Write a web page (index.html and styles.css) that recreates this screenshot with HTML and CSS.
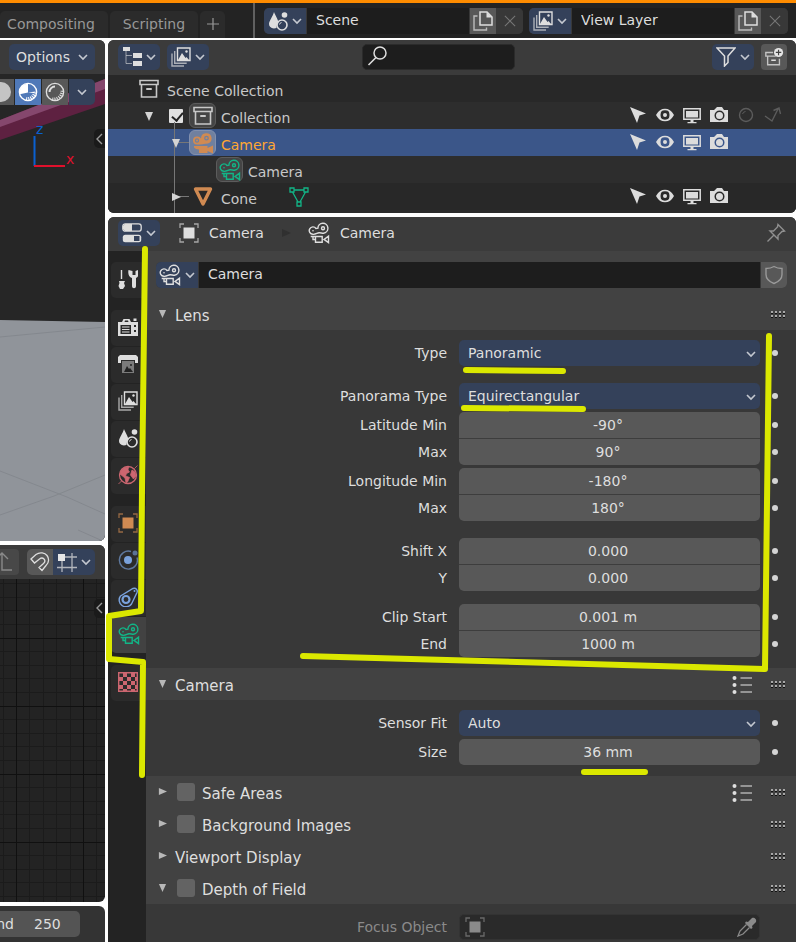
FILE: index.html
```html
<!DOCTYPE html>
<html lang="en">
<head>
  <meta charset="UTF-8" />
  <meta name="viewport" content="width=device-width, initial-scale=1.0"/>
  <title>Camera properties</title>
  <link rel="stylesheet" href="styles.css">
</head>
<body>
  <!-- Icon sprite -->
  <svg class="sprite" aria-hidden="true">
    <symbol id="chevron" viewBox="0 0 10 10"><path d="M1 3l4 4 4-4" fill="none" stroke="currentColor" stroke-width="1.6"/></symbol>
    <symbol id="chevron-left" viewBox="0 0 10 14"><path d="M8 2L3 7l5 5" fill="none" stroke="currentColor" stroke-width="1.4"/></symbol>
    <symbol id="down" viewBox="0 0 10 10"><path d="M1 1h8L5 10z" fill="currentColor"/></symbol>
    <symbol id="right" viewBox="0 0 10 10"><path d="M1 1l9 4-9 4z" fill="currentColor"/></symbol>
    <symbol id="plus" viewBox="0 0 14 14"><path d="M7 1v12M1 7h12" stroke="currentColor" stroke-width="1.2"/></symbol>
    <symbol id="close" viewBox="0 0 14 14"><path d="M1 1l12 12M13 1L1 13" stroke="currentColor" stroke-width="1.2"/></symbol>
    <symbol id="camera-data" viewBox="0 0 22 22">
      <g fill="none" stroke="currentColor" stroke-width="1.4">
        <path d="M4.8 12.3A3.700 3.700 0 1 1 8 6.500L9.900 6.200A5 5 0 1 1 15.500 11.200C14 11.500 13 10.700 11 10.800S8 12.600 4.800 12.300z"/>
        <circle cx="15" cy="6.200" r="1.500"/>
        <path d="M7.500 14.500h6.700v5.800H7.500zM2.700 14.500h4.800M5 14.500v3h2.500M20.500 14.200v6.400l-4.500-3.200z"/>
      </g>
      <circle cx="5" cy="8.800" r=".8" fill="currentColor"/>
    </symbol>
    <symbol id="camera-solid" viewBox="0 0 22 22">
      <path fill="currentColor" fill-rule="evenodd" d="M5 4.500a4 4 0 0 1 4 2A5.300 5.300 0 1 1 16 11.500C12 12 9 12.500 5 12.500a4 4 0 0 1 0-8zM5 6.300a2.200 2.200 0 1 0 0 4.400 2.200 2.200 0 0 0 0-4.400zM14.500 3.800a2.400 2.400 0 1 0 0 4.800 2.400 2.400 0 0 0 0-4.800z"/>
      <path d="M2 14h13.500v2l5.500-2.500v8L15.500 19v2H7v-3.500l-3-.5-2-1.500z" fill="currentColor"/>
      <circle cx="5" cy="8.500" r="1" fill="currentColor"/><circle cx="14.500" cy="6.200" r="1.100" fill="currentColor"/>
    </symbol>
    <symbol id="archive" viewBox="0 0 20 20"><path d="M1 1.500h18v4H1zM2.500 5.500v12.500h15V5.500" fill="none" stroke="currentColor" stroke-width="1.600"/><rect x="7" y="9" width="6" height="2" rx="1" fill="currentColor"/></symbol>
    <symbol id="archive-new" viewBox="0 0 22 22"><path d="M10 6H2v4h11M4 10v9.500h13V13" fill="none" stroke="currentColor" stroke-opacity=".8" stroke-width="1.500"/><path d="M8 14.500h5" stroke="currentColor" stroke-width="1.600"/><circle cx="16" cy="6" r="5" fill="#e6e6e6"/><path d="M16 3v6M13 6h6" stroke="#444" stroke-width="1.300"/></symbol>
    <symbol id="layers" viewBox="0 0 20 20">
      <path d="M6.500 1h12.500v12.500H6.500z" fill="none" stroke="currentColor" stroke-width="1.400"/>
      <path d="M7 13l4-7 3.500 5 1-1L18 13z" fill="currentColor"/><circle cx="15.500" cy="4.500" r="1.200" fill="currentColor"/>
      <path d="M3.700 4v12.300h12M1 6.500V19h12" fill="none" stroke="currentColor" stroke-opacity=".7" stroke-width="1.400"/>
    </symbol>
    <symbol id="scene" viewBox="0 0 20 20">
      <path d="M6 1c1 3 4.500 8 4.500 11-1.500 1-2 3-2 5C4 18.500 1 16 1 13c0-3 4-8 5-12z" fill="currentColor"/>
      <circle cx="16.500" cy="4" r="2.800" fill="currentColor"/>
      <circle cx="14" cy="14" r="5" fill="none" stroke="currentColor" stroke-width="1.600"/>
      <path d="M11.500 13.500a2.500 2.500 0 0 1 2-2" stroke="currentColor" fill="none"/>
    </symbol>
    <symbol id="copy" viewBox="0 0 20 20"><path d="M7 1h7l5 5v8H7z" fill="none" stroke="currentColor" stroke-width="1.500"/><path d="M13.500 1v5.500H19z" fill="currentColor"/><path d="M4.500 5H1v14h12.500v-2.500" fill="none" stroke="currentColor" stroke-opacity=".75" stroke-width="1.400"/></symbol>
    <symbol id="tree" viewBox="0 0 20 20"><path d="M1 0h7v4H1zM11 6h9v5h-9zM11 14h9v5h-9z" fill="currentColor"/><path d="M4 4v12.500h6M4 8.500h6" fill="none" stroke="currentColor" stroke-opacity=".6"/></symbol>
    <symbol id="search" viewBox="0 0 20 20"><circle cx="13" cy="7" r="6" fill="none" stroke="currentColor" stroke-width="1.500"/><path d="M9 11.500L1.500 19" stroke="currentColor" stroke-width="1.600"/></symbol>
    <symbol id="filter" viewBox="0 0 20 20"><path d="M1 1h18l-7 8v6.500L8.500 19V9z" fill="none" stroke="currentColor" stroke-width="1.500"/></symbol>
    <symbol id="pointer" viewBox="0 0 18 18"><path d="M1 1l16 6.500-6.500 2L8 17z" fill="currentColor"/></symbol>
    <symbol id="eye" viewBox="0 0 18 18"><path d="M1 9c4-7.300 12-7.300 16 0-4 7.300-12 7.300-16 0z" fill="none" stroke="currentColor" stroke-width="1.600"/><path d="M1 9c1.500-3 3.500-4.500 5-5-2 3-2 7 0 10-1.500-.5-3.500-2-5-5zM17 9c-1.500-3-3.500-4.500-5-5 2 3 2 7 0 10 1.500-.5 3.500-2 5-5z" fill="currentColor"/><circle cx="9" cy="9" r="2" fill="currentColor"/></symbol>
    <symbol id="screen" viewBox="0 0 18 18"><path d="M.8 2.800h16.400v10.400H.8z" fill="none" stroke="currentColor" stroke-width="1.500"/><path d="M3 5h12v6.500H3zM7.500 14h3v2h3v1.200h-9V16h3z" fill="currentColor"/></symbol>
    <symbol id="photo" viewBox="0 0 18 18"><path fill="currentColor" fill-rule="evenodd" d="M0 4h4l3-3h5l2 3h4v12H0zM9.500 4.500a5 5 0 1 0 0 10 5 5 0 0 0 0-10zm0 1.500a3.500 3.500 0 1 1 0 7 3.500 3.500 0 0 1 0-7z"/><circle cx="9.500" cy="9.500" r="2" fill="currentColor"/></symbol>
    <symbol id="holdout" viewBox="0 0 18 18"><circle cx="9" cy="9" r="6.500" fill="none" stroke="currentColor" stroke-width="1.400"/><path d="M5.500 8a3.500 3.500 0 0 1 3-2.500" fill="none" stroke="currentColor"/></symbol>
    <symbol id="indirect" viewBox="0 0 18 18"><path d="M1 10l7 5 6-12M9.500 4.500L15 2l1.500 6" fill="none" stroke="currentColor" stroke-width="1.400"/></symbol>
    <symbol id="cone" viewBox="0 0 20 20"><path d="M2.500 2h15L10 17z" fill="none" stroke="currentColor" stroke-width="3.400" stroke-linejoin="round"/></symbol>
    <symbol id="mesh" viewBox="0 0 20 20"><path d="M1 1h4v4H1zM15 1h4v4h-4zM8 15h4v4H8zM5 3h10M3.500 5L9 15M16.500 5L11 15" fill="none" stroke="currentColor" stroke-width="1.300"/></symbol>
    <symbol id="props" viewBox="0 0 20 20"><rect x=".8" y=".8" width="18.400" height="7.400" rx="2.500" fill="none" stroke="currentColor" stroke-width="1.300"/><path d="M3 1h7v7H3L1 6V3z" fill="currentColor"/><rect x=".8" y="11.800" width="18.400" height="7.400" rx="2.500" fill="currentColor"/><path d="M12 13h5.500v5H12z" fill="#34415a"/></symbol>
    <symbol id="object" viewBox="0 0 20 20"><path d="M4.500 4.500h11v11h-11z" fill="currentColor"/><path d="M1 5V1h4M15 1h4v4M19 15v4h-4M5 19H1v-4" fill="none" stroke="currentColor" stroke-opacity=".65" stroke-width="1.300"/></symbol>
    <symbol id="pin" viewBox="0 0 20 20"><path d="M12 1.500l6.500 6.500-2.500.5-4 4v3.500l-8-8h3.500l4-4zM8 12l-6.500 6.500" fill="none" stroke="currentColor" stroke-width="1.400"/></symbol>
    <symbol id="shield" viewBox="0 0 20 20"><path d="M10 1.500C7.500 3 5 3.500 2 3.500v6c0 4.500 4 7.500 8 9 4-1.500 8-4.500 8-9v-6c-3 0-5.500-.5-8-2z" fill="none" stroke="currentColor" stroke-width="1.400"/></symbol>
    <symbol id="tool" viewBox="0 0 20 20"><path d="M3.500 1v9M15.500 9v8" stroke="currentColor" stroke-width="1.400"/><path d="M1 12h6l-1 2 1 3-2 3H2l-1.500-3 1-3zM10.500 1c-.8 4 .5 7 3.500 8v8c0 3 4 3 4 0V9c3-1 3-5 2-8l-2.500 1v4h-3V2z" fill="currentColor"/></symbol>
    <symbol id="render" viewBox="0 0 20 20"><path fill="currentColor" fill-rule="evenodd" d="M1 5h3l1.500-3h6L13 5h7v14H0V5zM2.500 8v9H13V8zM16 8v2h2V8zm0 5v2h2v-2zM7 3.500L6.500 5h4L10 3.500zM15.500 1.500h3V4h-3z"/><path d="M4 10h7.500M4 12.500h7.500M4 15h7.500" stroke="currentColor"/></symbol>
    <symbol id="output" viewBox="0 0 20 20"><path d="M2 1h16l2 2v6h-3V6H3v3H0V3z" fill="currentColor"/><path d="M4 7h12v12H4z" fill="currentColor" fill-opacity=".45"/><path d="M6 18l3-6 2 3 1-1 3 4z" fill="#222"/><circle cx="13" cy="11" r="1" fill="#222"/></symbol>
    <symbol id="world" viewBox="0 0 20 20"><circle cx="10" cy="10" r="8.500" fill="none" stroke="currentColor" stroke-width="1.300"/><path d="M3 6C5 3 7 2 10.500 2L10 5l1.500 2-3 1.500-1 2.500 4 1.500L9.500 17 8 17.500 7 13 2 9zM14 5l3 2 1 4-2.500 3-3-4zM.5 19l3-3M16.500 3.500l3-3" fill="currentColor" stroke="currentColor" stroke-width=".800"/></symbol>
    <symbol id="physics" viewBox="0 0 20 20"><circle cx="10" cy="10" r="4" fill="currentColor"/><path d="M13 1.500a9 9 0 1 0 6 6" fill="none" stroke="currentColor" stroke-opacity=".65" stroke-width="1.400"/><circle cx="17" cy="3" r="2.500" fill="currentColor" fill-opacity=".6"/></symbol>
    <symbol id="constraint" viewBox="0 0 20 20"><path d="M2.500 9L15 1.500c3-1 5 1.500 4 4L13.500 17A6.500 6.500 0 1 1 2.500 9z" fill="none" stroke="currentColor" stroke-width="1.400"/><circle cx="8" cy="12.500" r="3.500" fill="none" stroke="currentColor" stroke-width="2.200"/><circle cx="16.500" cy="4" r="1" fill="currentColor"/></symbol>
    <symbol id="texture" viewBox="0 0 20 20"><path d="M.7.700h18.600v18.600H.7z" fill="none" stroke="currentColor" stroke-width="1.400"/><path fill="currentColor" d="M5 1h4v4H5zM13 1h4v4h-4zM1 5h4v4H1zM9 5h4v4H9zM17 5h2v4h-2zM5 9h4v4H5zM13 9h4v4h-4zM1 13h4v4H1zM9 13h4v4H9zM17 13h2v4h-2zM5 17h4v2H5zM13 17h4v2h-4z"/></symbol>
    <symbol id="presets" viewBox="0 0 20 20"><g fill="currentColor"><circle cx="2.500" cy="3" r="2"/><circle cx="2.500" cy="10" r="2"/><circle cx="2.500" cy="17" r="2"/></g><path d="M8.500 3H20M8.500 10H20M8.500 17H20" stroke="currentColor" stroke-opacity=".7" stroke-width="1.300"/></symbol>
    <symbol id="grip" viewBox="0 0 15 7" shape-rendering="crispEdges"><path d="M0 2.500h15M0 6.500h15" stroke="#111" stroke-dasharray="2 2"/><path d="M0 .5h15M0 1.500h15M0 4.500h15M0 5.500h15" stroke="#a8a8a8" stroke-dasharray="2 2"/></symbol>
    <symbol id="eyedropper" viewBox="0 0 20 20"><path d="M11 5l4-4c2-1 5 1 4 4l-4 4 .5 2-1.500 1-6-6 1-1.500z" fill="currentColor"/><path d="M9.500 7.500L3 14l-2 5 5-2 6.500-6.500" fill="none" stroke="currentColor" stroke-width="1.300"/></symbol>
    <symbol id="magnet" viewBox="0 0 20 20"><path d="M1 7l5-4.500c4-3 9-1.500 11 1s2.500 7-1 10L12 18.500l-3-3 4.500-4c2-2 1.500-3.500.5-4.500s-2.500-1.500-4.500 0l-5 4z" fill="none" stroke="currentColor" stroke-width="1.300"/></symbol>
    <symbol id="snap" viewBox="0 0 20 20"><path d="M5 8v12M15 1v19M0 15.500h20M8 5h12" stroke="currentColor" stroke-opacity=".75" stroke-width="1.300"/><path d="M1 2h7v7H1z" fill="#e6e6e6"/></symbol>
    <symbol id="matcap" viewBox="0 0 22 22"><circle cx="11" cy="11" r="9.500" fill="none" stroke="currentColor" stroke-width="1.500"/><path d="M11 2v9.500l-9 2A9.300 9.300 0 0 1 11 2zM11 11.500l8.500-1-2 1.500z" fill="currentColor"/><path d="M9 18.500a8 8 0 0 0 9.500-8" fill="none" stroke="currentColor" stroke-width="4" stroke-dasharray="1.200 1.200"/></symbol>
    <symbol id="rendered" viewBox="0 0 22 22"><circle cx="11" cy="11" r="9.500" fill="none" stroke="currentColor" stroke-width="1.500"/><path d="M5 11a6 6 0 0 1 6-6" fill="none" stroke="currentColor" stroke-width="2.200"/><path d="M8 18.500a9 9 0 0 0 10.500-10" fill="none" stroke="currentColor" stroke-width="3" stroke-dasharray="1.200 1.200"/></symbol>
  </svg>

  <!-- Top bar -->
  <header class="topbar">
    <nav class="workspaces">
      <button class="workspace first">Compositing</button>
      <button class="workspace">Scripting</button>
      <button class="workspace add" aria-label="Add workspace"><svg class="small"><use href="#plus"/></svg></button>
    </nav>
    <div class="datablocks">
      <div class="datablock">
        <button class="menu" aria-label="Browse scene"><svg class="icon"><use href="#scene"/></svg><svg class="chev"><use href="#chevron"/></svg></button>
        <input type="text" value="Scene" aria-label="Scene" />
        <button class="plain" aria-label="New scene"><svg class="icon"><use href="#copy"/></svg></button>
        <button class="plain off" aria-label="Delete scene"><svg class="cross"><use href="#close"/></svg></button>
      </div>
      <div class="datablock">
        <button class="menu" aria-label="Browse view layer"><svg class="icon"><use href="#layers"/></svg><svg class="chev"><use href="#chevron"/></svg></button>
        <input type="text" value="View Layer" aria-label="View layer" />
        <button class="plain" aria-label="New view layer"><svg class="icon"><use href="#copy"/></svg></button>
        <button class="plain off" aria-label="Delete view layer"><svg class="cross"><use href="#close"/></svg></button>
      </div>
    </div>
  </header>

  <main class="workspace-area">
    <div class="left">
      <!-- 3D viewport -->
      <section class="area viewport">
        <div class="bar end">
          <button class="menu options">Options <svg class="chev"><use href="#chevron"/></svg></button>
        </div>
        <div class="scene3d">
          <svg class="scene-art" viewBox="0 0 105 468" preserveAspectRatio="xMaxYMin slice">
            <path d="M0 0h105v468H0z" fill="#262626"/>
            <path d="M0 246l105 2v220H0z" fill="#90949a"/>
            <path d="M0 397l67 26 38 17M78 456l27 12M0 263l105-10M0 441l54-19 51-21" fill="none" stroke="#84888e"/>
            <path d="M0 46L105 5v25L0 66z" fill="#5e2141"/>
            <path d="M0 46L105 5v10L0 53z" fill="#85476d"/>
            <path d="M34.500 62v30" stroke="#0a60d0" stroke-width="2"/>
            <path d="M34 92h31" stroke="#e0102c" stroke-width="2"/>
            <text x="36" y="60" fill="#0a60d0">z</text>
            <text x="66" y="90" fill="#e0102c">x</text>
          </svg>
          <div class="shading">
            <button class="plain" aria-label="Solid"><span class="ball"></span></button>
            <button class="plain active" aria-label="Material preview"><svg class="icon"><use href="#matcap"/></svg></button>
            <button class="plain" aria-label="Rendered"><svg class="icon"><use href="#rendered"/></svg></button>
            <button class="menu narrow" aria-label="Shading options"><svg class="chev"><use href="#chevron"/></svg></button>
          </div>
          <button class="handle view-handle" aria-label="Open sidebar"><svg><use href="#chevron-left"/></svg></button>
        </div>
      </section>

      <!-- Graph editor -->
      <section class="area graph">
        <div class="bar end">
          <button class="plain cut" aria-label="Pivot"><svg class="icon" viewBox="0 0 20 20"><path d="M6 2v16h10M0 7l6-6 6 6" fill="none" stroke="currentColor" stroke-width="1.400"/></svg></button>
          <div class="joined">
            <button class="plain" aria-label="Snap"><svg class="icon"><use href="#magnet"/></svg></button>
            <button class="menu" aria-label="Snap to"><svg class="icon"><use href="#snap"/></svg><svg class="chev"><use href="#chevron"/></svg></button>
          </div>
        </div>
        <div class="grid-view">
          <svg class="grid-art" aria-hidden="true">
            <pattern id="grid" x="16" y="59" width="67" height="68" patternUnits="userSpaceOnUse">
              <path d="M13.500 0v68M27.500 0v68M40.500 0v68M54.500 0v68M0 13.500h67M0 27.500h67M0 40.500h67M0 54.500h67" stroke="#1b1b1b"/>
              <path d="M.5 0v68M0 .5h67" stroke="#101010"/>
            </pattern>
            <rect width="100%" height="100%" fill="url(#grid)"/>
          </svg>
          <button class="handle graph-handle" aria-label="Open sidebar"><svg><use href="#chevron-left"/></svg></button>
        </div>
      </section>

      <!-- Timeline -->
      <section class="area timeline">
        <label class="frame-end">End <input type="text" value="250" /></label>
      </section>
    </div>

    <div class="right">
      <!-- Outliner -->
      <section class="area outliner">
        <div class="bar outliner-bar">
          <div class="group">
            <button class="menu" aria-label="Editor type"><svg class="icon"><use href="#tree"/></svg><svg class="chev"><use href="#chevron"/></svg></button>
            <button class="menu" aria-label="Display mode"><svg class="icon"><use href="#layers"/></svg><svg class="chev"><use href="#chevron"/></svg></button>
          </div>
          <div class="search">
            <svg class="icon"><use href="#search"/></svg>
            <input type="text" aria-label="Search" />
          </div>
          <div class="group push">
            <button class="menu" aria-label="Filter"><svg class="icon"><use href="#filter"/></svg><svg class="chev"><use href="#chevron"/></svg></button>
            <button class="plain" aria-label="New collection"><svg class="icon"><use href="#archive-new"/></svg></button>
          </div>
        </div>
        <ul class="tree">
          <li>
            <span class="cell"><svg class="icon"><use href="#archive"/></svg></span>
            <span class="name">Scene Collection</span>
          </li>
          <li>
            <span class="cell"><svg class="tri"><use href="#down"/></svg></span>
            <span class="cell"><input type="checkbox" class="check" aria-label="Collection enabled" checked /></span>
            <span class="cell boxed"><svg class="icon"><use href="#archive"/></svg></span>
            <span class="name">Collection</span>
            <span class="toggles">
              <svg><use href="#pointer"/></svg><svg><use href="#eye"/></svg><svg><use href="#screen"/></svg><svg><use href="#photo"/></svg><svg class="dim"><use href="#holdout"/></svg><svg class="dim"><use href="#indirect"/></svg>
            </span>
          </li>
          <li class="level1 selected">
            <span class="cell branch"><svg class="tri"><use href="#down"/></svg></span>
            <span class="cell boxed orange"><svg class="cam"><use href="#camera-solid"/></svg></span>
            <span class="name">Camera</span>
            <span class="toggles">
              <svg><use href="#pointer"/></svg><svg><use href="#eye"/></svg><svg><use href="#screen"/></svg><svg><use href="#photo"/></svg>
            </span>
          </li>
          <li class="level3">
            <span class="cell boxed green"><svg class="cam"><use href="#camera-data"/></svg></span>
            <span class="name">Camera</span>
          </li>
          <li class="level1">
            <span class="cell branch"><svg class="tri"><use href="#right"/></svg></span>
            <span class="cell orange"><svg class="icon"><use href="#cone"/></svg></span>
            <span class="name">Cone</span>
            <span class="cell linked green"><svg class="icon"><use href="#mesh"/></svg></span>
            <span class="toggles">
              <svg><use href="#pointer"/></svg><svg><use href="#eye"/></svg><svg><use href="#screen"/></svg><svg><use href="#photo"/></svg>
            </span>
          </li>
        </ul>
      </section>

      <!-- Properties editor -->
      <section class="area properties">
        <div class="bar crumbs">
          <button class="menu" aria-label="Editor type"><svg class="icon"><use href="#props"/></svg><svg class="chev"><use href="#chevron"/></svg></button>
          <span class="crumb first-crumb"><svg class="icon"><use href="#object"/></svg>Camera</span>
          <svg class="tri crumb-arrow"><use href="#right"/></svg>
          <span class="crumb"><svg class="cam"><use href="#camera-data"/></svg>Camera</span>
          <button class="pin" aria-label="Pin"><svg class="icon"><use href="#pin"/></svg></button>
        </div>
        <div class="props-body">
          <nav class="tabs">
            <button aria-label="Tool"><svg class="icon"><use href="#tool"/></svg></button>
            <button class="gap" aria-label="Render"><svg class="icon"><use href="#render"/></svg></button>
            <button aria-label="Output"><svg class="icon"><use href="#output"/></svg></button>
            <button aria-label="View layer"><svg class="icon"><use href="#layers"/></svg></button>
            <button aria-label="Scene"><svg class="icon"><use href="#scene"/></svg></button>
            <button class="red" aria-label="World"><svg class="icon"><use href="#world"/></svg></button>
            <button class="gap orange" aria-label="Object"><svg class="icon"><use href="#object"/></svg></button>
            <button class="blue" aria-label="Physics"><svg class="icon"><use href="#physics"/></svg></button>
            <button class="blue" aria-label="Constraints"><svg class="icon"><use href="#constraint"/></svg></button>
            <button class="green current" aria-label="Camera data"><svg class="cam"><use href="#camera-data"/></svg></button>
            <button class="gap red" aria-label="Texture"><svg class="icon"><use href="#texture"/></svg></button>
          </nav>

          <div class="panels">
            <div class="datablock">
              <button class="menu" aria-label="Browse camera"><svg class="cam"><use href="#camera-data"/></svg><svg class="chev"><use href="#chevron"/></svg></button>
              <input type="text" value="Camera" aria-label="Camera name" />
              <button class="plain shield" aria-label="Fake user"><svg class="icon"><use href="#shield"/></svg></button>
            </div>

            <h2><svg class="tri"><use href="#down"/></svg>Lens<svg class="grip"><use href="#grip"/></svg></h2>
            <div class="panel">
              <div class="row far">
                <label for="type">Type</label>
                <div class="select"><select id="type"><option>Panoramic</option></select><svg class="chev"><use href="#chevron"/></svg></div>
                <i class="dot"></i>
              </div>
              <div class="row near">
                <label for="panoType">Panorama Type</label>
                <div class="select"><select id="panoType"><option>Equirectangular</option></select><svg class="chev"><use href="#chevron"/></svg></div>
                <i class="dot"></i>
              </div>
              <div class="row upper"><label for="latMin">Latitude Min</label><input type="text" id="latMin" value="-90°" /><i class="dot"></i></div>
              <div class="row lower near"><label for="latMax">Max</label><input type="text" id="latMax" value="90°" /><i class="dot"></i></div>
              <div class="row upper"><label for="lonMin">Longitude Min</label><input type="text" id="lonMin" value="-180°" /><i class="dot"></i></div>
              <div class="row lower far"><label for="lonMax">Max</label><input type="text" id="lonMax" value="180°" /><i class="dot"></i></div>
              <div class="row upper"><label for="shiftX">Shift X</label><input type="text" id="shiftX" value="0.000" /><i class="dot"></i></div>
              <div class="row lower mid"><label for="shiftY">Y</label><input type="text" id="shiftY" value="0.000" /><i class="dot"></i></div>
              <div class="row upper"><label for="clipStart">Clip Start</label><input type="text" id="clipStart" value="0.001 m" /><i class="dot"></i></div>
              <div class="row lower"><label for="clipEnd">End</label><input type="text" id="clipEnd" value="1000 m" /><i class="dot"></i></div>
            </div>

            <h2><svg class="tri"><use href="#down"/></svg>Camera<svg class="presets"><use href="#presets"/></svg><svg class="grip"><use href="#grip"/></svg></h2>
            <div class="panel">
              <div class="row near">
                <label for="sensorFit">Sensor Fit</label>
                <div class="select"><select id="sensorFit"><option>Auto</option></select><svg class="chev"><use href="#chevron"/></svg></div>
                <i class="dot"></i>
              </div>
              <div class="row"><label for="size">Size</label><input type="text" id="size" value="36 mm" /><i class="dot"></i></div>
            </div>

            <h2><svg class="tri"><use href="#right"/></svg><input type="checkbox" class="box" id="safe" /><label for="safe">Safe Areas</label><svg class="presets"><use href="#presets"/></svg><svg class="grip"><use href="#grip"/></svg></h2>
            <h2><svg class="tri"><use href="#right"/></svg><input type="checkbox" class="box" id="bgImages" /><label for="bgImages">Background Images</label><svg class="grip"><use href="#grip"/></svg></h2>
            <h2><svg class="tri"><use href="#right"/></svg>Viewport Display<svg class="grip"><use href="#grip"/></svg></h2>
            <h2><svg class="tri"><use href="#down"/></svg><input type="checkbox" class="box" id="dof" /><label for="dof">Depth of Field</label><svg class="grip"><use href="#grip"/></svg></h2>
            <div class="panel last">
              <div class="row disabled">
                <label for="focus">Focus Object</label>
                <div class="picker">
                  <svg class="icon"><use href="#object"/></svg>
                  <input type="text" id="focus" />
                  <svg class="icon"><use href="#eyedropper"/></svg>
                </div>
              </div>
            </div>
          </div>
        </div>
      </section>
    </div>
  </main>

  <!-- Marker strokes drawn over the interface -->
  <svg class="marker" viewBox="0 0 796 942" preserveAspectRatio="none" aria-hidden="true">
    <path d="M145 249L142 490 141 611 109 616 109 659 143 662 142 775"/>
    <path d="M769 336L765 669 303 656"/>
    <path d="M466 370L563 371M464 408L583 409M584 772H645"/>
  </svg>
</body>
</html>
```
FILE: styles.css
```css
:root {
  --bar: #3b3b3b;
  --dark: #232323;
  --field: #1d1d1d;
  --menu: #34415a;
  --widget: #585858;
  --panel: #383838;
  --panel-head: #424242;
  --text: #dedede;
  --orange: #d08a52;
  --green: #12b587;
  --red: #cc6670;
  --blue: #7aa2dc;
}

* {
  box-sizing: border-box;
  margin: 0;
}

body {
  position: relative;
  display: flex;
  flex-direction: column;
  min-height: 100vh;
  font-family: "DejaVu Sans", Verdana, sans-serif;
  font-size: 14px;
  line-height: 18px;
  color: var(--text);
  background: #fff;
  overflow-x: hidden;
}

button, input, select {
  font: inherit;
  color: inherit;
  border: none;
  padding: 0;
  min-width: 0;
}

svg {
  display: block;
  flex: none;
}

.sprite {
  position: absolute;
  width: 0;
  height: 0;
}

.icon {
  width: 20px;
  height: 20px;
}

.cam {
  width: 22px;
  height: 22px;
}

.chev {
  width: 10px;
  height: 10px;
  color: #c4c8d0;
}

.tri {
  width: 10px;
  height: 10px;
  color: #b8b8b8;
}

/* Buttons */
.menu, .plain {
  display: flex;
  align-items: center;
  justify-content: center;
  gap: 4px;
  flex: none;
  height: 26px;
}

.menu {
  width: 42px;
  background: var(--menu);
  border-radius: 5px;
}

.plain {
  width: 26px;
  background: var(--widget);
  border-radius: 4px;
}

.plain.off {
  background: #383838;
  color: #777;
}

.small {
  width: 14px;
  height: 14px;
}

.cross {
  width: 12px;
  height: 12px;
}

.datablock {
  display: flex;
  flex: 1;
  gap: 1px;
  min-width: 0;
  border-radius: 5px;
  background: #383838;
  overflow: hidden;
}

.datablock > * {
  border-radius: 0;
}

.datablock input {
  flex: 1;
  padding: 0 9px 2px;
  background: var(--field);
}

/* Top bar */
.topbar {
  display: flex;
  height: 40px;
  border-top: 3px solid #ff8c00;
  border-bottom: 2px solid #fff;
  background: var(--dark);
}

.workspaces {
  display: flex;
  flex: none;
  align-items: flex-end;
  gap: 2px;
  width: 253px;
}

.workspace {
  display: flex;
  align-items: center;
  justify-content: center;
  width: 88px;
  height: 27px;
  padding-bottom: 2px;
  border-radius: 5px 5px 0 0;
  background: #2b2b2b;
  color: #989898;
}

.workspace.first {
  width: 108px;
  padding-right: 6px;
}

.workspace.add {
  width: 25px;
}

.datablocks {
  display: flex;
  flex: 1;
  align-items: center;
  gap: 6px;
  min-width: 0;
  padding: 0 8px 0 9px;
  border-left: 2px solid #606060;
}

/* Areas */
.workspace-area {
  display: grid;
  grid-template-columns: 105px 1fr;
  gap: 3px;
  flex: 1;
}

.left {
  display: grid;
  grid-template-rows: 7fr 5fr auto;
  gap: 4px;
  min-width: 0;
}

.right {
  display: flex;
  flex-direction: column;
  gap: 4px;
  min-width: 0;
}

.area {
  display: flex;
  flex-direction: column;
  border-radius: 6px;
  background: var(--dark);
  overflow: hidden;
}

.left .area {
  border-radius: 0 6px 6px 0;
}

.bar {
  display: flex;
  align-items: center;
  height: 34px;
  padding: 0 10px;
  background: var(--bar);
}

.bar.end {
  justify-content: flex-end;
  gap: 8px;
}

.options {
  width: 86px;
  gap: 8px;
}

.scene3d, .grid-view {
  position: relative;
  flex: 1;
}

.scene-art, .grid-art {
  position: absolute;
  width: 100%;
  height: 100%;
}

.scene-art text {
  font-size: 14px;
}

.shading {
  position: absolute;
  top: 5px;
  right: 10px;
  display: flex;
  gap: 1px;
}

.shading button {
  border-radius: 0;
}

.shading .narrow {
  width: 26px;
  border-radius: 0 5px 5px 0;
}

.shading .active {
  background: #5079b8;
  color: #fff;
}

.ball {
  width: 20px;
  height: 20px;
  border-radius: 50%;
  background: #c4c4c4;
}

.handle {
  position: absolute;
  right: 0;
  width: 11px;
  height: 19px;
  border-radius: 5px 0 0 5px;
  background: #1a1a1a;
  color: #999;
}

.handle svg {
  width: 10px;
  height: 14px;
}

.view-handle {
  top: 55px;
}

.graph-handle {
  top: 20px;
}

.joined {
  display: flex;
  flex: none;
  border-radius: 5px;
  overflow: hidden;
}

.joined button {
  border-radius: 0;
}

.cut {
  background: #484848;
  color: #8a8a8a;
}

.timeline {
  align-items: flex-end;
  padding: 5px 25px 5px 0;
  background: #333;
}

.left .timeline {
  border-radius: 0 6px 0 0;
}

.frame-end {
  display: flex;
  align-items: center;
  gap: 20px;
  height: 26px;
  padding-right: 18px;
  border-radius: 5px;
  background: #545454;
}

.frame-end input {
  width: 28px;
  background: none;
}

/* Outliner */
.outliner-bar {
  display: grid;
  grid-template-columns: 244px 153px 1fr;
  height: 35px;
  padding: 0 9px 2px 10px;
}

.group {
  display: flex;
  gap: 7px;
}

.push {
  justify-content: flex-end;
}

.search {
  position: relative;
}

.search .icon {
  position: absolute;
  top: 2px;
  left: 5px;
}

.search input {
  width: 100%;
  height: 26px;
  padding: 0 8px 0 30px;
  border: 1px solid #2b2b2b;
  border-radius: 5px;
  background: var(--field);
}

.tree {
  position: relative;
  list-style: none;
  padding: 0 0 3px;
  background: #2b2b2b;
  color: #c8c8c8;
}

.tree::after {
  content: "";
  position: absolute;
  top: 47px;
  bottom: 0;
  left: 66px;
  width: 1px;
  background: #777;
}

.tree li {
  display: flex;
  align-items: center;
  height: 27px;
  padding: 0 10px 0 27px;
  background: #282828;
}

.tree li:nth-child(even) {
  background: #2d2d2d;
}

.tree .level1 {
  padding-left: 54px;
}

.tree .level3 {
  padding-left: 108px;
}

.tree li.selected {
  background: #3b5689;
}

.selected .name {
  color: #ffa733;
}

.cell {
  display: flex;
  align-items: center;
  justify-content: center;
  width: 27px;
  height: 25px;
}

.branch {
  background: linear-gradient(#777, #777) 14px 12px / 13px 1px no-repeat;
}

.tree .tri {
  position: relative;
  z-index: 1;
  color: #d4d4d4;
}

.boxed {
  border: 1px solid #5c5c5c;
  border-radius: 6px;
  background: #444;
}

.selected .boxed {
  border-color: #8290ae;
  background: #70809f;
}

.linked {
  margin-left: 29px;
}

.name {
  padding: 4px 0 0 5px;
}

.toggles {
  display: grid;
  grid-template-columns: repeat(6, 27px);
  justify-items: center;
  margin-left: auto;
  padding-bottom: 2px;
  color: #dcdcdc;
}

.toggles svg {
  width: 18px;
  height: 18px;
}

.toggles .dim {
  color: #5c5c5c;
}

.check {
  appearance: none;
  width: 14px;
  height: 14px;
  border-radius: 1px;
  background: #e0e0e0;
}

.check::after {
  content: "";
  display: block;
  width: 5px;
  height: 9px;
  margin: 1px 0 0 5px;
  border: solid #222;
  border-width: 0 2px 2px 0;
  transform: rotate(40deg);
}

.orange { color: var(--orange); }
.green { color: var(--green); }
.red { color: var(--red); }
.blue { color: var(--blue); }

/* Properties */
.properties {
  flex: 1;
  border-radius: 6px 6px 0 0;
}

.crumbs {
  padding-bottom: 2px;
}

.crumb {
  display: flex;
  align-items: center;
  gap: 10px;
}

.first-crumb {
  margin-left: 19px;
}

.crumb-arrow {
  margin: 0 17px;
  color: #303030;
}

.pin {
  margin-left: auto;
  background: none;
  color: #909090;
}

.props-body {
  display: grid;
  grid-template-columns: 38px 1fr;
  flex: 1;
}

.tabs {
  display: flex;
  flex-direction: column;
  gap: 1px;
  padding: 11px 0 0 3px;
}

.tabs button {
  display: flex;
  align-items: center;
  height: 36px;
  padding: 0 0 2px 7px;
  border-radius: 5px 0 0 5px;
  background: #2b2b2b;
}

.tabs .gap {
  margin-top: 11px;
}

.tabs .current {
  background: #424242;
}

.panels {
  padding-top: 11px;
  background: var(--panel-head);
}

.panels .datablock {
  margin: 0 9px 10px 10px;
}

.shield {
  color: #999;
}

h2 {
  display: flex;
  align-items: center;
  height: 32px;
  padding: 3px 10px 0 12px;
  font-size: 15px;
  font-weight: 400;
}

h2 .tri {
  width: 9px;
  height: 9px;
  margin: 0 8px 4px 0;
}

.grip {
  width: 15px;
  height: 7px;
  margin: 0 0 2px auto;
}

.presets {
  width: 20px;
  height: 20px;
  margin: 0 0 2px auto;
}

.presets + .grip {
  margin-left: 19px;
}

.box {
  appearance: none;
  width: 18px;
  height: 18px;
  margin: 0 7px 4px 2px;
  border-radius: 3px;
  background: #636363;
}

.panel {
  padding: 10px 0 11px;
  background: var(--panel);
}

.row {
  display: grid;
  grid-template-columns: 1fr 1fr 24px;
  column-gap: 12px;
  align-items: center;
  height: 26px;
}

.row.lower {
  height: 27px;
}

.row label {
  text-align: right;
}

.row > input {
  width: 100%;
  height: 26px;
  padding-right: 3px;
  border-radius: 5px;
  background: var(--widget);
  text-align: center;
}

.upper > input {
  border-radius: 5px 5px 0 0;
}

.lower > input {
  height: 27px;
  border-top: 1px solid #3d3d3d;
  border-radius: 0 0 5px 5px;
}

.near { margin-bottom: 3px; }
.mid { margin-bottom: 13px; }
.far { margin-bottom: 17px; }

.select {
  position: relative;
}

.select select {
  appearance: none;
  display: block;
  width: 100%;
  height: 26px;
  padding: 0 24px 0 9px;
  border-radius: 5px;
  background: var(--menu);
}

.select .chev {
  position: absolute;
  top: 9px;
  right: 4px;
}

.dot {
  width: 6px;
  height: 6px;
  border-radius: 50%;
  background: #d4d4d4;
}

.panel.last {
  padding-bottom: 2px;
}

.disabled {
  color: #8a8a8a;
}

.picker {
  display: flex;
  align-items: center;
  height: 26px;
  padding: 0 2px 0 5px;
  border: 1px solid #333;
  border-radius: 5px;
  background: #2a2a2a;
}

.picker input {
  flex: 1;
  background: none;
}

.marker {
  position: absolute;
  inset: 0;
  width: 100%;
  height: 100%;
  fill: none;
  stroke: #dbe800;
  stroke-width: 6;
  stroke-linecap: round;
  stroke-linejoin: round;
  pointer-events: none;
}
```
